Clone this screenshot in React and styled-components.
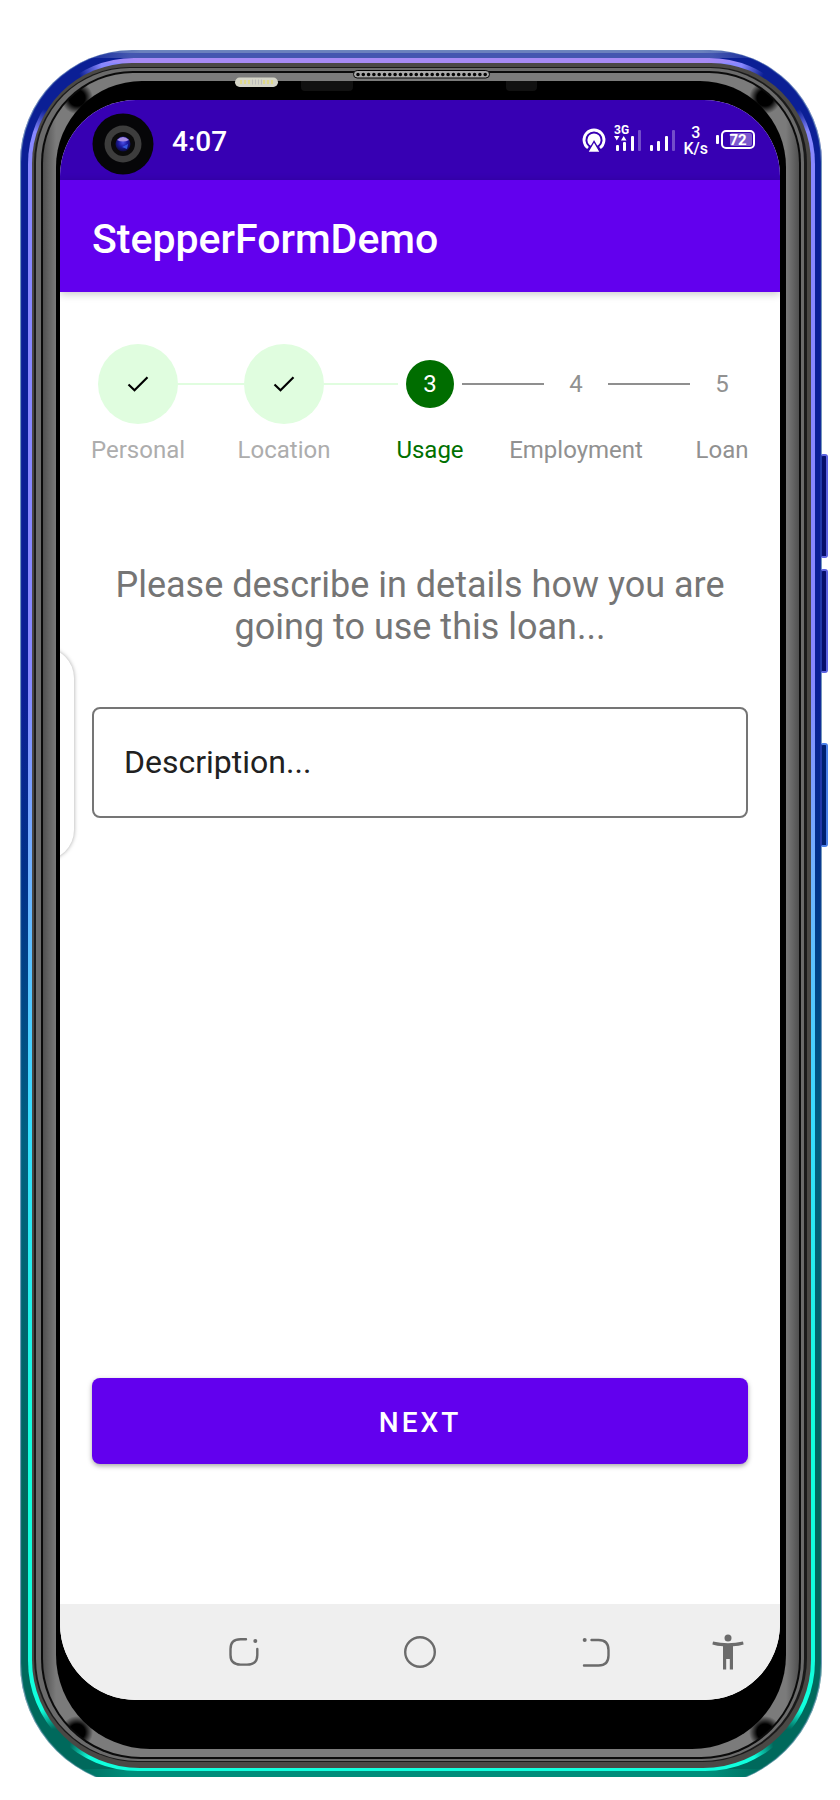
import React from "react";
import styled, { createGlobalStyle } from "styled-components";

const Global = createGlobalStyle`
  * { box-sizing: border-box; }
  body { margin: 0; background: #fff; font-family: Roboto, "Liberation Sans", sans-serif; }
  button, input { font: inherit; }
`;

const Page = styled.div`
  display: flex;
  min-height: 100vh;
  padding: 50px 12px 23px 20px;
`;

const Device = styled.div`
  position: relative;
  display: flex;
  flex: 1;
  padding-right: 6px;
`;

const Clip = styled.div`
  display: flex;
  flex: 1;
  overflow: hidden;
`;

const Ring = styled.div`
  display: flex;
  flex: 1;
  min-width: 0;
  padding: ${(p) => p.$pad};
  border-radius: ${(p) => p.$radius};
  background: ${(p) => p.$fill};
`;

const Shell = styled(Ring)`
  margin-bottom: -10px;
  box-shadow: inset 1px 0 1px #7fa3c4, inset -1px 0 1px #7fa3c4;
`;

const SideKey = styled.span`
  position: absolute;
  right: 0;
  top: ${(p) => p.$top}px;
  width: 8px;
  height: 104px;
  border: 2px solid ${(p) => p.$edge};
  border-left-color: #2238a8;
  border-radius: 3px;
  background: ${(p) => p.$fill};
`;

const Hardware = styled.svg`
  position: absolute;
  top: 18px;
  left: 212px;
`;

const Screen = styled.div`
  position: relative;
  display: flex;
  flex: 1;
  flex-direction: column;
  min-width: 0;
  overflow: hidden;
  border-radius: 76px;
  background: #fff;
`;

const StatusBar = styled.header`
  display: flex;
  align-items: center;
  height: 80px;
  padding: 0 25px 0 32px;
  background: #3700b3;
  color: #fff;
`;

const Camera = styled.svg`
  margin: 8px 18px 0 0;
`;

const Clock = styled.time`
  flex: 1;
  font-size: 28px;
  font-weight: 500;
  line-height: 32px;
  padding-top: 4px;
`;

const StatusIcons = styled.div`
  display: flex;
  align-items: center;
  gap: 8px;
`;

const Signals = styled.div`
  display: flex;
  gap: 7px;
  margin-bottom: 4px;
`;

const Speed = styled.div`
  font-size: 16px;
  font-weight: 500;
  line-height: 16px;
  text-align: center;
  margin-top: 2px;
`;

const AppBar = styled.div`
  display: flex;
  align-items: center;
  height: 112px;
  padding: 6px 32px 0;
  background: #6200ee;
  color: #fff;
  box-shadow: 0 2px 8px rgba(0, 0, 0, 0.22);
`;

const Title = styled.h1`
  margin: 0;
  font-size: 41px;
  font-weight: 500;
  line-height: 48px;
`;

const Form = styled.form`
  display: flex;
  flex: 1;
  flex-direction: column;
  padding: 52px 32px 140px;
`;

const Stepper = styled.ol`
  display: flex;
  margin: 0 -47px 0 -27px;
  padding: 0;
  list-style: none;
`;

const toneColor = { done: "#adadad", active: "#007000", todo: "#919191" };

const Step = styled.li`
  display: flex;
  flex: 1 0 0;
  flex-direction: column;
  align-items: center;
  gap: 12px;
  min-width: 0;
  color: ${(p) => toneColor[p.$state]};
  font-size: 24px;
  line-height: 28px;
`;

const Track = styled.div`
  display: flex;
  align-items: center;
  align-self: stretch;
  height: 80px;
  gap: ${(p) => (p.$state === "done" ? 0 : 8)}px;
`;

const Line = styled.span`
  flex: 1;
  height: 2px;
  background: ${(p) => p.$color};
`;

const Marker = styled.span`
  display: flex;
  align-items: center;
  justify-content: center;
  width: ${(p) => (p.$state === "done" ? 80 : 48)}px;
  height: ${(p) => (p.$state === "done" ? 80 : 48)}px;
  border-radius: 50%;
  background: ${(p) => ({ done: "#e0fddf", active: "#006d00", todo: "transparent" })[p.$state]};
  color: ${(p) => (p.$state === "active" ? "#fff" : "inherit")};
`;

const Prompt = styled.label`
  margin-top: 100px;
  color: #757575;
  font-size: 36px;
  line-height: 42px;
  text-align: center;
`;

const TextField = styled.input`
  width: 100%;
  height: 111px;
  margin-top: 59px;
  padding: 0 30px 2px;
  border: 2px solid #757575;
  border-radius: 8px;
  outline: 0;
  background: #fff;
  color: #212121;
  font-size: 32px;
  &::placeholder { color: #212121; opacity: 1; }
`;

const NextButton = styled.button`
  height: 86px;
  margin-top: auto;
  padding: 2px 0 0;
  border: 0;
  border-radius: 8px;
  background: #6200ee;
  box-shadow: 0 2px 5px rgba(0, 0, 0, 0.35);
  color: #fff;
  font-size: 28px;
  font-weight: 500;
  letter-spacing: 3px;
`;

const EdgeHandle = styled.span`
  position: absolute;
  left: -46px;
  top: 548px;
  width: 60px;
  height: 212px;
  border-radius: 36px;
  background: #fff;
  box-shadow: 0 0 4px rgba(0, 0, 0, 0.35);
`;

const NavBar = styled.nav`
  display: grid;
  grid-template-columns: 12fr 22fr 22fr 22fr 11fr 1fr;
  height: 96px;
  background: #efefef;
`;

const NavButton = styled.button`
  display: flex;
  align-items: center;
  justify-content: center;
  grid-column: ${(p) => p.$col};
  padding: 0;
  border: 0;
  background: none;
  color: #6b6b6b;
`;

const steps = [
  { label: "Personal", state: "done" },
  { label: "Location", state: "done" },
  { label: "Usage", state: "active" },
  { label: "Employment", state: "todo" },
  { label: "Loan", state: "todo" },
];

const lineColor = (i) => {
  if (i < 0 || i > 3) return "transparent";
  return i < 2 ? "#e0fddf" : "#8f8f8f";
};

const bars = [
  [0, 21],
  [7, 17],
  [15, 12],
  [22, 6],
];

function Signal({ data }) {
  return (
    <svg width="27" height="28" viewBox="0 0 27 28" fill="#fff" aria-hidden="true">
      {data && (
        <>
          <text x="0" y="10" fontFamily="Roboto, sans-serif" fontSize="12" fontWeight="700">3G</text>
          <path d="M0 12h5.500l-2.700 4.500zM7 16.500h5.500L9.700 12z" />
        </>
      )}
      {bars.map(([x, y], i) => (
        <rect
          key={x}
          x={x + 2}
          y={data && i === 1 ? 18 : y}
          width="3"
          height={27 - (data && i === 1 ? 18 : y)}
          rx="1"
          opacity={i === 3 ? 0.3 : 1}
        />
      ))}
    </svg>
  );
}

function Hotspot() {
  return (
    <svg width="24" height="24" viewBox="0 0 24 24" fill="none" stroke="#fff" aria-hidden="true">
      <path d="M6 20a10 10 0 1 1 12 0" strokeWidth="2.800" />
      <circle cx="12" cy="12" r="6.600" fill="#fff" stroke="none" />
      <path d="M12 13.500l-6.500 11h13z" fill="#fff" stroke="#3700b3" strokeWidth="1.400" />
    </svg>
  );
}

function Battery() {
  return (
    <svg width="39" height="20" viewBox="0 0 39 20" aria-label="Battery 72%">
      <rect x="0" y="5" width="3" height="9" rx="1" fill="#fff" />
      <rect x="6" y="1" width="32" height="17" rx="4" fill="none" stroke="#fff" strokeWidth="2" />
      <rect x="14" y="3" width="22" height="13" rx="2" fill="#fff" opacity="0.350" />
      <text x="22" y="15" textAnchor="middle" fontFamily="Roboto, sans-serif" fontSize="15" fontWeight="700" fill="#fff">72</text>
    </svg>
  );
}

function FrontCamera() {
  return (
    <Camera width="62" height="62" viewBox="0 0 62 62" aria-hidden="true">
      <defs>
        <radialGradient id="lens" cx="0.5" cy="0.400" r="0.600">
          <stop offset="0" stopColor="#4a4fe8" />
          <stop offset="0.500" stopColor="#1c1aa0" />
          <stop offset="1" stopColor="#0b0b3c" />
        </radialGradient>
      </defs>
      <circle cx="31" cy="31" r="30.500" fill="#060608" />
      <circle cx="31" cy="31" r="18.500" fill="#3d3d3d" />
      <circle cx="31" cy="31" r="12" fill="#0a0a0a" />
      <circle cx="31" cy="31" r="7.500" fill="url(#lens)" />
      <path d="M25 27q6-6 12 0q-6 3-12 0z" fill="#a48be0" />
      <path d="M30 34l6-3-1 5z" fill="#3558e0" />
    </Camera>
  );
}

function BezelParts() {
  return (
    <Hardware width="310" height="26" viewBox="0 0 310 26" aria-hidden="true">
      <rect x="3" y="9.500" width="43" height="9.500" rx="4.700" fill="#d5d5c8" />
      <path d="M8 14h10M31 14h10" stroke="#e0d98a" strokeWidth="4" strokeDasharray="2 2" />
      <path d="M20 14h10" stroke="#bdbdbb" strokeWidth="5" strokeDasharray="1 2" />
      <path d="M69 13h52v6q0 4-4 4H73q-4 0-4-4zM274 13h31v6q0 4-4 4h-23q-4 0-4-4z" fill="#111" />
      <rect x="121.500" y="2.500" width="136" height="7.500" rx="3.700" fill="#a8a8a8" stroke="#050505" />
      <path d="M126 6.500H254" stroke="#050505" strokeWidth="3.600" strokeLinecap="round" strokeDasharray="0 5.300" />
    </Hardware>
  );
}

const shellFill = `
  linear-gradient(to right, transparent 70px, #6a80bd 120px calc(100% - 120px), transparent calc(100% - 70px)) top / 100% 3px no-repeat,
  linear-gradient(to right, transparent 50px, #4356b0 110px calc(100% - 110px), transparent calc(100% - 50px)) top / 100% 8px no-repeat,
  linear-gradient(to right, transparent 50px, #008d7a 110px calc(100% - 110px), transparent calc(100% - 50px)) bottom / 100% 18px no-repeat,
  linear-gradient(#0b1f95 37%, #00308a 47%, #006080 63%, #00695c 84%)`;

const glowFill = `
  radial-gradient(circle at 28px 28px, #0b1f95 26px, transparent 50px),
  radial-gradient(circle at calc(100% - 28px) 28px, #0b1f95 26px, transparent 50px),
  radial-gradient(circle at 28px calc(100% - 28px), #00695c 14px, transparent 36px),
  radial-gradient(circle at calc(100% - 28px) calc(100% - 28px), #00695c 14px, transparent 36px),
  linear-gradient(to right, transparent 50px, #a78bf5 110px calc(100% - 110px), transparent calc(100% - 50px)) top / 100% 5px no-repeat,
  linear-gradient(#8888ff 36%, #72b0ff 47%, #38dcff 62%, #11ffdd 80%)`;

const glossFill = `
  radial-gradient(circle at 34px 25px, #000 8px, transparent 16px),
  radial-gradient(circle at calc(100% - 34px) 25px, #000 8px, transparent 16px),
  radial-gradient(circle at 34px calc(100% - 25px), #000 8px, transparent 16px),
  radial-gradient(circle at calc(100% - 34px) calc(100% - 25px), #000 8px, transparent 16px),
  linear-gradient(to right, #505050, #7b7b7b 13px calc(100% - 13px), #505050)`;

function Phone({ children }) {
  return (
    <Device>
      <Clip>
        <Shell $pad="8px 7px 16px 8px" $radius="112px 112px 124px 124px" $fill={shellFill}>
          <Ring $pad="5px 4px 3px 4px" $radius="106px 106px 110px 110px" $fill={glowFill}>
            <Ring $pad="4px 4px 6px 2px" $radius="100px 100px 108px 108px" $fill="#4a4845">
              <Ring $pad="1px 3px 1px 2px" $radius="96px 96px 104px 104px" $fill="#1a1a1a">
                <Ring $pad="3px 3px 2px 5px" $radius="94px 94px 102px 102px" $fill="#6b6b6b">
                  <Ring $pad="2px" $radius="92px 92px 100px 100px" $fill="#0a0a0a">
                    <Ring $pad="8px 13px" $radius="90px 90px 98px 98px" $fill={glossFill}>
                      <Ring $pad="19px 6px 49px 4px" $radius="86px 86px 94px 94px" $fill="#000">
                        {children}
                      </Ring>
                    </Ring>
                  </Ring>
                </Ring>
              </Ring>
            </Ring>
          </Ring>
        </Shell>
      </Clip>
      <SideKey $top={404} $edge="#5b62e0" $fill="#07106b" />
      <SideKey $top={519} $edge="#5b62e0" $fill="#07106b" />
      <SideKey $top={693} $edge="#4a7fe8" $fill="#002070" />
      <BezelParts />
    </Device>
  );
}

export default function App() {
  return (
    <Page>
      <Global />
      <Phone>
        <Screen>
          <StatusBar>
            <FrontCamera />
            <Clock>4:07</Clock>
            <StatusIcons>
              <Hotspot />
              <Signals>
                <Signal data />
                <Signal />
              </Signals>
              <Speed>3<br />K/s</Speed>
              <Battery />
            </StatusIcons>
          </StatusBar>
          <AppBar>
            <Title>StepperFormDemo</Title>
          </AppBar>
          <Form onSubmit={(e) => e.preventDefault()}>
            <Stepper>
              {steps.map(({ label, state }, i) => (
                <Step key={label} $state={state} aria-current={state === "active" ? "step" : undefined}>
                  <Track $state={state}>
                    <Line $color={lineColor(i - 1)} />
                    <Marker $state={state}>
                      {state === "done" ? (
                        <svg width="22" height="16" viewBox="0 0 22 16" fill="none" stroke="#000" strokeWidth="2.200" aria-hidden="true">
                          <path d="M1.500 8.500L7.500 14.200L20.500 1.200" />
                        </svg>
                      ) : (
                        i + 1
                      )}
                    </Marker>
                    <Line $color={lineColor(i)} />
                  </Track>
                  <span>{label}</span>
                </Step>
              ))}
            </Stepper>
            <Prompt htmlFor="description">
              Please describe in details how you are going to use this loan...
            </Prompt>
            <TextField id="description" type="text" placeholder="Description..." />
            <NextButton type="submit">NEXT</NextButton>
          </Form>
          <NavBar>
            <NavButton $col={2} type="button" aria-label="Recent apps">
              <svg width="32" height="32" viewBox="0 0 32 32" fill="none" stroke="currentColor" strokeWidth="2.400" strokeLinecap="round">
                <path d="M18 3.200H12.500Q2.500 3.200 2.500 13V19Q2.500 28.600 12.500 28.600H19Q29.300 28.600 29.300 19V13" />
                <circle cx="27.300" cy="5" r="2" fill="currentColor" stroke="none" />
              </svg>
            </NavButton>
            <NavButton $col={3} type="button" aria-label="Home">
              <svg width="32" height="32" viewBox="0 0 32 32" fill="none" stroke="currentColor" strokeWidth="2.400">
                <circle cx="16" cy="16" r="14.800" />
              </svg>
            </NavButton>
            <NavButton $col={4} type="button" aria-label="Back">
              <svg width="32" height="32" viewBox="0 0 32 32" fill="none" stroke="currentColor" strokeWidth="2.400" strokeLinecap="round">
                <path d="M11.500 4H18.500Q28.500 4 28.500 14V19.500Q28.500 29.500 18.500 29.500H4" />
                <circle cx="4.700" cy="4" r="2" fill="currentColor" stroke="none" />
              </svg>
            </NavButton>
            <NavButton $col={5} type="button" aria-label="Accessibility">
              <svg width="32" height="36" viewBox="0 0 32 36" fill="currentColor">
                <circle cx="16" cy="4" r="3.500" />
                <path d="M1 7.500Q16 11 31 7.500L31.600 10.500Q27 12 21 12.200V35.500H17.800V25H14.200V35.500H11V12.200Q5 12 0.400 10.500Z" />
              </svg>
            </NavButton>
          </NavBar>
          <EdgeHandle />
        </Screen>
      </Phone>
    </Page>
  );
}
